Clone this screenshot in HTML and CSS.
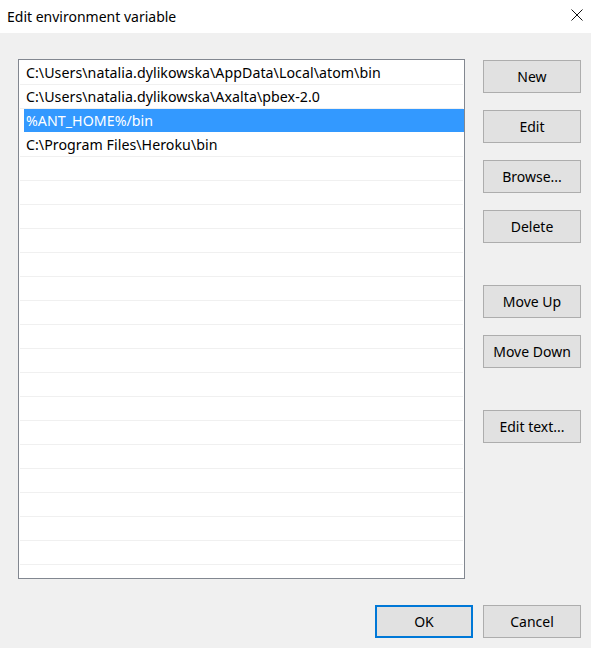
FILE: index.html
```html
<!DOCTYPE html>
<html>
<head>
<meta charset="utf-8">
<title>Edit environment variable</title>
<link rel="stylesheet" href="styles.css">
</head>
<body>
<div class="window">
  <div class="titlebar">
    <span class="title">Edit environment variable</span>
    <svg class="close" width="12" height="12" viewBox="0 0 12 12"><path d="M0.5 0.5 L11.5 11.5 M11.5 0.5 L0.5 11.5" stroke="#111" stroke-width="1" fill="none"/></svg>
  </div>
  <div class="body">
    <div class="main">
      <div class="list">
        <div class="row">C:\Users\natalia.dylikowska\AppData\Local\atom\bin</div>
        <div class="row">C:\Users\natalia.dylikowska\Axalta\pbex-2.0</div>
        <div class="row sel">%ANT_HOME%/bin</div>
        <div class="row">C:\Program Files\Heroku\bin</div>
        <div class="row"></div><div class="row"></div><div class="row"></div><div class="row"></div>
        <div class="row"></div><div class="row"></div><div class="row"></div><div class="row"></div>
        <div class="row"></div><div class="row"></div><div class="row"></div><div class="row"></div>
        <div class="row"></div><div class="row"></div><div class="row"></div><div class="row"></div>
        <div class="row"></div><div class="row"></div>
      </div>
      <div class="side">
        <div class="group">
          <button class="btn">New</button>
          <button class="btn">Edit</button>
          <button class="btn">Browse...</button>
          <button class="btn">Delete</button>
        </div>
        <div class="group">
          <button class="btn">Move Up</button>
          <button class="btn">Move Down</button>
        </div>
        <div class="group">
          <button class="btn">Edit text...</button>
        </div>
      </div>
    </div>
    <div class="footer">
      <button class="btn default">OK</button>
      <button class="btn">Cancel</button>
    </div>
  </div>
</div>
</body>
</html>
```
FILE: styles.css
```css
html, body {
  margin: 0;
  padding: 0;
}
body {
  width: 591px;
  height: 648px;
  background: #f0f0f0;
  font-family: "Noto Sans", "Open Sans", sans-serif;
  font-size: 14px;
  color: #000;
  overflow: hidden;
}
.window {
  display: flex;
  flex-direction: column;
  height: 648px;
}
.titlebar {
  height: 33px;
  background: #fff;
  display: flex;
  align-items: center;
  justify-content: space-between;
  padding: 0 8px 0 7px;
  box-sizing: border-box;
}
.title {
  font-size: 14px;
  color: #000;
  margin-top: -1px;
}
.close {
  display: block;
  margin-top: -3px;
}
.body {
  padding: 26px 10px 0 18px;
}
.main {
  display: flex;
  gap: 18px;
}
.list {
  width: 448px;
  height: 520px;
  box-sizing: border-box;
  border: 1px solid #828790;
  background: #fff;
  padding: 1px 1px 0 1px;
  overflow: hidden;
}
.row {
  height: 24px;
  box-sizing: border-box;
  border-bottom: 1px solid #f0f0f0;
  padding: 1px 0 0 6px;
  line-height: 22px;
  white-space: nowrap;
  font-size: 14.2px;
  letter-spacing: 0.05px;
}
.row.sel {
  background: #3399ff;
  color: #fff;
  margin: 0 -1px 0 4px;
  padding-left: 2px;
  border-bottom-color: #fff;
}
.side {
  display: flex;
  flex-direction: column;
  gap: 42px;
  padding-top: 1px;
}
.group {
  display: flex;
  flex-direction: column;
  gap: 17px;
}
.btn {
  width: 98px;
  height: 33px;
  box-sizing: border-box;
  background: #e1e1e1;
  border: 1px solid #adadad;
  font-family: inherit;
  font-size: 14px;
  color: #000;
  padding: 0;
  margin: 0;
}
.btn.default {
  border: 2px solid #0078d7;
}
.footer {
  display: flex;
  justify-content: flex-end;
  gap: 10px;
  margin-top: 26px;
}
```
